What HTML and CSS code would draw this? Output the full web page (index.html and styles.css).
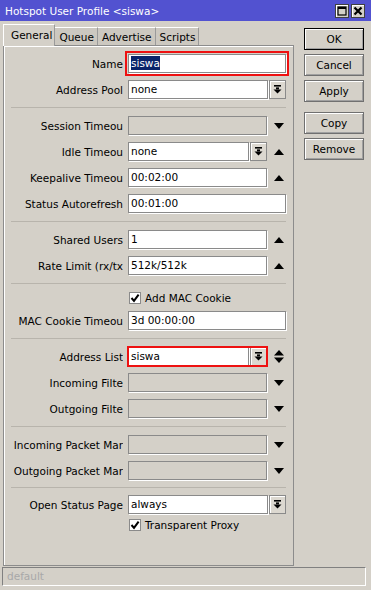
FILE: index.html
```html
<!DOCTYPE html>
<html lang="en">
<head>
    <meta charset="UTF-8">
    <title>Hotspot User Profile &lt;siswa&gt;</title>
    <link rel="stylesheet" href="styles.css">
</head>
<body>

<div class="window">
    <!-- barra de titulo -->
    <div class="titlebar">
        <span class="title">Hotspot User Profile &lt;siswa&gt;</span>
        <span class="tb-btn">
            <svg width="10" height="10" viewBox="0 0 10 10"><rect x="1" y="1" width="8" height="8" fill="none" stroke="#000" stroke-width="1.2"/><rect x="1" y="1" width="8" height="2" fill="#000"/></svg>
        </span>
        <span class="tb-btn">
            <svg width="10" height="10" viewBox="0 0 10 10"><path d="M1.5 1.5 L8.5 8.5 M8.5 1.5 L1.5 8.5" stroke="#000" stroke-width="2.2"/></svg>
        </span>
    </div>

    <div class="main">
        <div class="left">
            <div class="tabs">
                <div class="tab active">General</div>
                <div class="tab">Queue</div>
                <div class="tab">Advertise</div>
                <div class="tab">Scripts</div>
            </div>

            <div class="panel">
                <div class="row">
                    <div class="lbl">Name</div>
                    <div class="field w-full hl-name"><span class="sel">siswa</span></div>
                </div>
                <div class="row">
                    <div class="lbl">Address Pool</div>
                    <div class="combo w-full">
                        <div class="field">none</div>
                        <div class="dd"><svg width="9" height="9" viewBox="0 0 9 9"><rect x="1" y="0" width="7" height="1.6"/><rect x="3" y="2.4" width="3" height="2"/><polygon points="0.5,4.4 8.5,4.4 4.5,8.6"/></svg></div>
                    </div>
                </div>

                <div class="sep"></div>

                <div class="row">
                    <div class="lbl">Session Timeou</div>
                    <div class="field w-arrow off"></div>
                    <span class="arrow"><svg width="10" height="6" viewBox="0 0 10 6"><polygon points="0,0 10,0 5,6"/></svg></span>
                </div>
                <div class="row">
                    <div class="lbl">Idle Timeou</div>
                    <div class="combo w-arrow">
                        <div class="field">none</div>
                        <div class="dd"><svg width="9" height="9" viewBox="0 0 9 9"><rect x="1" y="0" width="7" height="1.6"/><rect x="3" y="2.4" width="3" height="2"/><polygon points="0.5,4.4 8.5,4.4 4.5,8.6"/></svg></div>
                    </div>
                    <span class="arrow"><svg width="10" height="6" viewBox="0 0 10 6"><polygon points="0,6 10,6 5,0"/></svg></span>
                </div>
                <div class="row">
                    <div class="lbl">Keepalive Timeou</div>
                    <div class="field w-arrow">00:02:00</div>
                    <span class="arrow"><svg width="10" height="6" viewBox="0 0 10 6"><polygon points="0,6 10,6 5,0"/></svg></span>
                </div>
                <div class="row">
                    <div class="lbl">Status Autorefresh</div>
                    <div class="field w-full">00:01:00</div>
                </div>

                <div class="sep"></div>

                <div class="row">
                    <div class="lbl">Shared Users</div>
                    <div class="field w-arrow">1</div>
                    <span class="arrow"><svg width="10" height="6" viewBox="0 0 10 6"><polygon points="0,6 10,6 5,0"/></svg></span>
                </div>
                <div class="row">
                    <div class="lbl">Rate Limit (rx/tx</div>
                    <div class="field w-arrow">512k/512k</div>
                    <span class="arrow"><svg width="10" height="6" viewBox="0 0 10 6"><polygon points="0,6 10,6 5,0"/></svg></span>
                </div>

                <div class="sep"></div>

                <div class="row check">
                    <span class="box"><svg width="10" height="10" viewBox="0 0 10 10"><path d="M1.5 5 L4 7.8 L8.6 1.6" fill="none" stroke="#000" stroke-width="2"/></svg></span>
                    <span>Add MAC Cookie</span>
                </div>
                <div class="row">
                    <div class="lbl">MAC Cookie Timeou</div>
                    <div class="field w-full">3d 00:00:00</div>
                </div>

                <div class="sep"></div>

                <div class="row">
                    <div class="lbl">Address List</div>
                    <div class="combo w-arrow hl-list">
                        <div class="field">siswa</div>
                        <div class="dd"><svg width="9" height="9" viewBox="0 0 9 9"><rect x="1" y="0" width="7" height="1.6"/><rect x="3" y="2.4" width="3" height="2"/><polygon points="0.5,4.4 8.5,4.4 4.5,8.6"/></svg></div>
                    </div>
                    <span class="arrow"><svg width="10" height="13" viewBox="0 0 10 13"><polygon points="0,5.5 10,5.5 5,0"/><polygon points="0,7.5 10,7.5 5,13"/></svg></span>
                </div>
                <div class="row">
                    <div class="lbl">Incoming Filte</div>
                    <div class="field w-arrow off"></div>
                    <span class="arrow"><svg width="10" height="6" viewBox="0 0 10 6"><polygon points="0,0 10,0 5,6"/></svg></span>
                </div>
                <div class="row">
                    <div class="lbl">Outgoing Filte</div>
                    <div class="field w-arrow off"></div>
                    <span class="arrow"><svg width="10" height="6" viewBox="0 0 10 6"><polygon points="0,0 10,0 5,6"/></svg></span>
                </div>

                <div class="sep"></div>

                <div class="row">
                    <div class="lbl">Incoming Packet Mar</div>
                    <div class="field w-arrow off"></div>
                    <span class="arrow"><svg width="10" height="6" viewBox="0 0 10 6"><polygon points="0,0 10,0 5,6"/></svg></span>
                </div>
                <div class="row">
                    <div class="lbl">Outgoing Packet Mar</div>
                    <div class="field w-arrow off"></div>
                    <span class="arrow"><svg width="10" height="6" viewBox="0 0 10 6"><polygon points="0,0 10,0 5,6"/></svg></span>
                </div>

                <div class="sep last"></div>

                <div class="row">
                    <div class="lbl">Open Status Page</div>
                    <div class="combo w-full">
                        <div class="field">always</div>
                        <div class="dd"><svg width="9" height="9" viewBox="0 0 9 9"><rect x="1" y="0" width="7" height="1.6"/><rect x="3" y="2.4" width="3" height="2"/><polygon points="0.5,4.4 8.5,4.4 4.5,8.6"/></svg></div>
                    </div>
                </div>
                <div class="row check tight">
                    <span class="box"><svg width="10" height="10" viewBox="0 0 10 10"><path d="M1.5 5 L4 7.8 L8.6 1.6" fill="none" stroke="#000" stroke-width="2"/></svg></span>
                    <span>Transparent Proxy</span>
                </div>
            </div>
        </div>

        <!-- botones laterales -->
        <div class="side">
            <button class="btn default">OK</button>
            <button class="btn">Cancel</button>
            <button class="btn">Apply</button>
            <button class="btn gap">Copy</button>
            <button class="btn">Remove</button>
        </div>
    </div>

    <div class="statusbar">default</div>
</div>

</body>
</html>
```

FILE: styles.css
```css
/* --- General --- */
body {
    margin: 0;
    background: #d4d0c8;
    font-family: "DejaVu Sans", Verdana, sans-serif;
    font-size: 10.5px;
    color: #000;
}

.window {
    width: 371px;
    height: 590px;
    display: flex;
    flex-direction: column;
    box-sizing: border-box;
}

/* --- Barra de titulo --- */
.titlebar {
    height: 21px;
    background: #5252d0;
    display: flex;
    align-items: center;
    padding: 0 6px 0 5px;
    gap: 2px;
}
.title { color: #fff; flex: 1; padding-top: 1px; }
.tb-btn {
    width: 12px;
    height: 12px;
    background: #d4d0c8;
    border: 1px solid #404040;
    box-shadow: inset 1px 1px 0 #fff;
    display: flex;
    align-items: center;
    justify-content: center;
}
.tb-btn svg { display: block; }

/* --- Zona principal --- */
.main { display: flex; padding: 3px 0 0 3px; }
.left { width: 291px; display: flex; flex-direction: column; }

.tabs { display: flex; align-items: flex-end; height: 21px; position: relative; z-index: 1; }
.tab {
    height: 18px;
    line-height: 19px;
    padding: 0 3px 0 4px;
    background: #ccc8c0;
    border-top: 1px solid #fff;
    border-right: 1px solid #9a9a9a;
    box-sizing: border-box;
    white-space: nowrap;
}
.tab.active {
    height: 22px;
    line-height: 20px;
    margin-bottom: -1px;
    background: #d4d0c8;
    border-left: 1px solid #fff;
    padding: 0 2px 0 7px;
}

.panel {
    height: 521px;
    box-sizing: border-box;
    border: 1px solid #8c8c8c;
    box-shadow: inset 1px 1px 0 #fff;
    padding: 8px 0 0 0;
    display: flex;
    flex-direction: column;
    gap: 7px;
}

/* --- Filas del formulario --- */
.row { display: flex; align-items: center; height: 19px; }
.lbl {
    width: 119px;
    margin-right: 5px;
    text-align: right;
    white-space: nowrap;
    overflow: hidden;
}

.field {
    height: 19px;
    box-sizing: border-box;
    border: 1px solid #8a8a8a;
    background: #fff;
    padding-left: 2px;
    line-height: 17px;
    white-space: nowrap;
    box-shadow: 1px 1px 0 #fff;
}
.field.off { background: #d4d0c8; }
.w-full { width: 158px; }
.w-arrow { width: 139px; }

.combo { display: flex; height: 19px; }
.combo .field { flex: 1; }
.dd {
    width: 17px;
    height: 19px;
    margin-left: 1px;
    box-sizing: border-box;
    border: 1px solid #8a8a8a;
    background: #dcd8d0;
    box-shadow: inset 1px 1px 0 #fff;
    display: flex;
    align-items: center;
    justify-content: center;
}
.dd svg { display: block; }

.arrow { width: 22px; display: flex; justify-content: center; padding-left: 1px; }
.arrow svg { display: block; }

.sel { background: #0a246a; color: #fff; padding: 1px 0; }

.hl-name { outline: 2px solid #ee1111; outline-offset: 1px; }
.hl-list { outline: 2px solid #ee1111; outline-offset: -1px; }

.row.check { height: 12px; padding-left: 125px; gap: 4px; }
.row.tight { margin-top: -2px; }
.box {
    width: 12px;
    height: 12px;
    box-sizing: border-box;
    border: 1px solid #8a8a8a;
    background: #fff;
    display: flex;
    align-items: center;
    justify-content: center;
}
.box svg { display: block; }

.sep {
    height: 1px;
    background: #b8b4ac;
    margin: 1px 7px;
}
.sep.last { margin: 0 7px; }

/* --- Botones laterales --- */
.side {
    width: 60px;
    margin-left: 10px;
    padding-top: 4px;
    display: flex;
    flex-direction: column;
    gap: 4px;
}
.btn {
    height: 22px;
    font-family: inherit;
    font-size: 10.5px;
    color: #000;
    background: #d4d0c8;
    border: 1px solid #707070;
    box-shadow: inset 1px 1px 0 #fff, inset -1px -1px 0 #a0a0a0;
    padding: 0;
}
.btn.default { border-color: #000; }
.btn.gap { margin-top: 6px; }

/* --- Barra de estado --- */
.statusbar {
    height: 19px;
    margin: 1px 5px 0 2px;
    box-sizing: border-box;
    border-top: 1px solid #808080;
    border-left: 1px solid #808080;
    border-bottom: 1px solid #fff;
    border-right: 1px solid #fff;
    color: #a8a8a8;
    padding-left: 4px;
    line-height: 17px;
}
```
